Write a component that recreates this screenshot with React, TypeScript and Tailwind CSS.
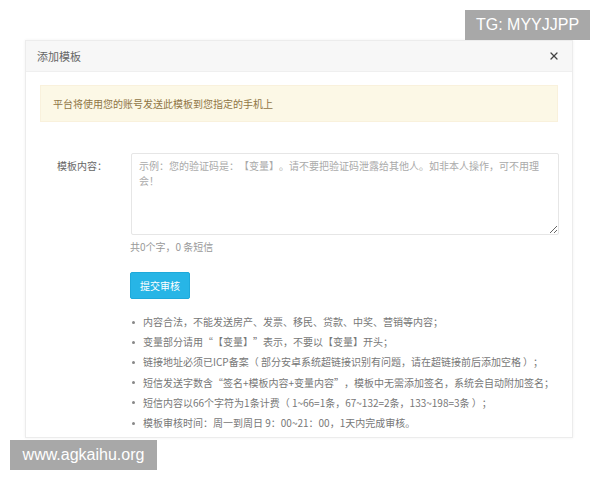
import { X } from "lucide-react";

const rules = [
  "内容合法，不能发送房产、发票、移民、贷款、中奖、营销等内容；",
  "变量部分请用“【变量】”表示，不要以【变量】开头；",
  "链接地址必须已ICP备案（ 部分安卓系统超链接识别有问题，请在超链接前后添加空格 ）；",
  "短信发送字数含“签名+模板内容+变量内容”，模板中无需添加签名，系统会自动附加签名；",
  "短信内容以66个字符为1条计费（ 1~66=1条，67~132=2条，133~198=3条 ）；",
  "模板审核时间：周一到周日 9：00~21：00，1天内完成审核。",
];

export default function App() {
  return (
    <div className="relative w-[600px] h-[480px] bg-white font-['Noto_Sans_CJK_SC','Noto_Sans',sans-serif] [text-spacing-trim:space-all] overflow-hidden">
      {/* modal */}
      <div className="ml-[25px] mt-[40px] w-[548px] h-[398px] bg-white border border-[#ececec] shadow-[0_0_3px_rgba(0,0,0,0.06)] overflow-hidden">
        <div className="h-[31px] bg-[#f7f7f7] border-b border-[#efefef] flex items-center justify-between pl-[11px] pr-[12px]">
          <span className="text-[11px] text-[#666]">添加模板</span>
          <X className="w-[12px] h-[12px] text-[#444]" strokeWidth={2.6} />
        </div>

        <div className="px-[14px] pt-[13px]">
          <div className="h-[37px] bg-[#fcf8e6] border border-[#f9f1dc] flex items-center pl-[12px] text-[10px] text-[#8f7545]">
            平台将使用您的账号发送此模板到您指定的手机上
          </div>

          <div className="flex mt-[31px]">
            <div className="w-[91px] shrink-0 pl-[17px] pt-[6px] text-[10px] leading-[14px] text-[#666]">
              模板内容：
            </div>
            <div className="flex flex-col">
              <textarea
                className="w-[428px] h-[82px] border border-[#e6e6e6] rounded-[2px] px-[7px] pt-[4px] text-[10px] leading-[15px] text-[#555] placeholder:text-[#aaa] outline-none [text-spacing-trim:space-all]"
                placeholder={"示例：您的验证码是：【变量】。请不要把验证码泄露给其他人。如非本人操作，可不用理\n会！"}
              />
              <div className="mt-[5px] -ml-px text-[10px] leading-[14px] text-[#999]">共0个字，0 条短信</div>
              <button className="mt-[18px] -ml-px w-[60px] h-[27px] bg-[#27b5e6] border border-[#1ea9da] rounded-[2px] text-[10px] text-white">
                提交审核
              </button>
              <ul className="mt-[13px] text-[10px] leading-[20.2px] text-[#777]">
                {rules.map((r) => (
                  <li key={r} className="flex items-center whitespace-pre">
                    <span className="w-[3px] h-[3px] rounded-full bg-[#888] ml-[1px] mr-[8px] shrink-0" />
                    {r}
                  </li>
                ))}
              </ul>
            </div>
          </div>
        </div>
      </div>

      {/* watermarks */}
      <div className="absolute left-[465px] top-[10px] w-[125px] h-[30px] bg-[#a8a8a8] flex items-center justify-center text-[16px] text-white font-['Liberation_Sans',sans-serif]">
        TG: MYYJJPP
      </div>
      <div className="absolute left-[10px] top-[440px] w-[147px] h-[30px] bg-[#a8a8a8] flex items-center justify-center text-[16px] text-white font-['Liberation_Sans',sans-serif]">
        www.agkaihu.org
      </div>
    </div>
  );
}
